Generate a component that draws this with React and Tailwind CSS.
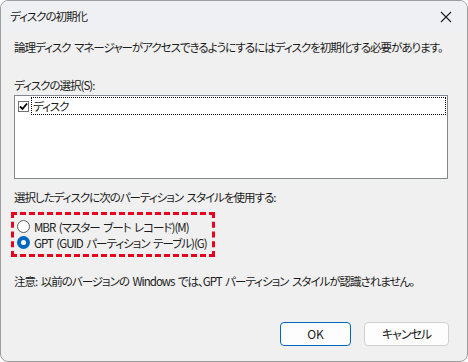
import React, { useState } from 'react';

const font = "font-['Noto_Sans_CJK_JP','Noto_Sans',sans-serif] [font-feature-settings:'palt']";
const txt = 'text-[11.5px] leading-[16px] tracking-[-1px] [word-spacing:2px] whitespace-nowrap';

const Radio = ({ checked, label, onClick }) => (
    <div className="flex items-center h-[16px]" onClick={onClick}>
        {checked ? (
            <span className="w-[13px] h-[13px] shrink-0 rounded-full bg-[#0067c0] flex items-center justify-center">
                <span className="w-[5px] h-[5px] rounded-full bg-white" />
            </span>
        ) : (
            <span className="w-[13px] h-[13px] shrink-0 rounded-full border border-[#5c5c5c] bg-white" />
        )}
        <span className={`ml-[4px] ${txt}`}>{label}</span>
    </div>
);

const App = () => {
    const [style, setStyle] = useState('gpt');

    return (
        <div className={`w-[468px] h-[362px] bg-white text-[#1b1b1b] ${font}`}>
            <div className="w-[468px] h-[362px] border border-[#9d9d9d] rounded-[8px] overflow-hidden bg-[#f0f0f0] flex flex-col">

                {/* title bar */}
                <div className="h-[31px] shrink-0 bg-[#eff0f3] flex items-center justify-between pl-[9px] pr-[15px]">
                    <span className={`${txt} -mt-[1px]`}>ディスクの初期化</span>
                    <svg width="12" height="12" viewBox="0 0 12 12">
                        <path d="M1 1L11 11M11 1L1 11" stroke="#1b1b1b" strokeWidth="1.1" />
                    </svg>
                </div>

                <div className="flex-1 flex flex-col pl-[13px] pr-[20px]">
                    <p className={`mt-[7px] ${txt}`}>
                        論理ディスク マネージャーがアクセスできるようにするにはディスクを初期化する必要があります。
                    </p>

                    <p className={`mt-[22px] ${txt}`}>ディスクの選択(S):</p>

                    <div className="mt-[2px] h-[84px] w-[434px] border border-[#828790] bg-white p-[1px]">
                        <div className="flex items-center h-[18px]">
                            <span className="ml-[2px] w-[11px] h-[11px] border border-[#707070] bg-white flex items-center justify-center">
                                <svg width="9" height="9" viewBox="0 0 9 9">
                                    <path d="M1 4.5L3.5 7L8 1.5" stroke="#000" strokeWidth="1.8" fill="none" />
                                </svg>
                            </span>
                            <span className={`ml-[2px] flex-1 h-[18px] border border-dotted border-black flex items-center pl-[1px] ${txt}`}>
                                ディスク
                            </span>
                        </div>
                    </div>

                    <p className={`mt-[10px] ${txt}`}>選択したディスクに次のパーティション スタイルを使用する:</p>

                    <div className="-ml-[3px] mt-[7px] w-[204px] h-[45px] border-[3px] border-dashed border-[#e8001c] flex flex-col justify-center pl-[3px]">
                        <Radio checked={style === 'mbr'} label="MBR (マスター ブート レコード)(M)" onClick={() => setStyle('mbr')} />
                        <Radio checked={style === 'gpt'} label="GPT (GUID パーティション テーブル)(G)" onClick={() => setStyle('gpt')} />
                    </div>

                    <p className={`mt-[16px] ${txt}`}>
                        注意: 以前のバージョンの Windows では、GPT パーティション スタイルが認識されません。
                    </p>

                    <div className="mt-[33px] flex justify-end gap-[13px] -mr-[2px]">
                        <button className="w-[71px] h-[24px] rounded-[4px] border border-[#0067c0] bg-[#fdfdfd] text-[12px]">OK</button>
                        <button className="w-[85px] h-[24px] rounded-[4px] border border-[#d0d0d0] bg-[#fdfdfd] text-[12px] tracking-[-1px]">キャンセル</button>
                    </div>
                </div>
            </div>
        </div>
    );
};

export default App;
